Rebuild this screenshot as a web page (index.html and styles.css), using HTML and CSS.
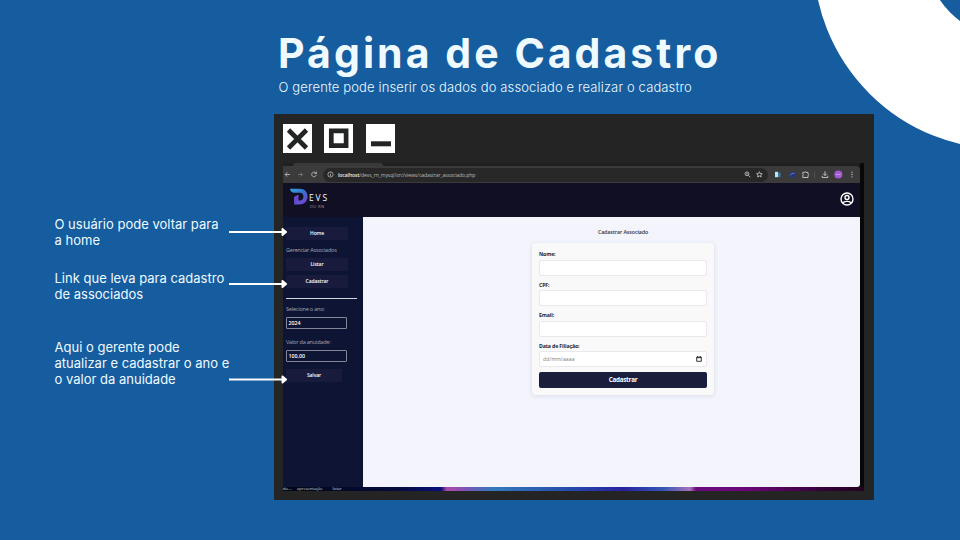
FILE: index.html
```html
<!DOCTYPE html>
<html lang="pt-BR">
<head>
<meta charset="utf-8">
<title>Página de Cadastro</title>
<link rel="stylesheet" href="styles.css">
</head>
<body>
<main class="slide">
  <svg class="ring" width="150" height="155" viewBox="810 0 150 155"><circle cx="1004" cy="-41.3" r="133.3" fill="none" stroke="#fff" stroke-width="114.4"/></svg>
  <header class="heading">
    <h1>Página de Cadastro</h1>
    <p>O gerente pode inserir os dados do associado e realizar o cadastro</p>
  </header>
  <div class="content">
    <aside class="notes">
      <p class="n1"><span>O usuário pode voltar para</span><br><span>a home</span></p>
      <p class="n2"><span>Link que leva para cadastro</span><br><span>de associados</span></p>
      <p class="n3"><span>Aqui o gerente pode</span><br><span>atualizar e cadastrar o ano e</span><br><span>o valor da anuidade</span></p>
    </aside>
    <section class="window">
      <div class="controls">
        <svg viewBox="0 0 29 29"><path d="M5.5 6 23.5 24M23.5 6 5.5 24" stroke="#232424" stroke-width="4.6"/></svg>
        <svg viewBox="0 0 29 29"><path d="M7.3 6.800h14.800v14.800H7.300z" fill="none" stroke="#232424" stroke-width="4.7"/></svg>
        <svg viewBox="0 0 29 29"><path d="M5 19.800h20" stroke="#232424" stroke-width="5"/></svg>
      </div>
      <div class="browser">
        <div class="tabs"><i></i></div>
        <div class="toolbar">
          <svg class="nav" width="40" height="17" viewBox="0 0 40 17" fill="none" stroke="#bbb" stroke-width=".9"><path d="M7 8.500H2.200M4.300 6.400 2.200 8.500l2.100 2.100"/><path stroke="#777" d="M15 8.500h4.600M17.600 6.500l2 2-2 2"/><path d="M33 7.200a2.300 2.300 0 1 0 .2 2M33.400 5.600v2h-2"/></svg>
          <div class="address">
            <svg width="7" height="7" viewBox="0 0 7 7" fill="none" stroke="#bbb" stroke-width=".8"><circle cx="3.5" cy="3.5" r="2.6"/><path d="M3.500 3v2.100M3.500 1.700v.6"/></svg>
            <span class="url"><b>localhost</b>/devs_rn_mysql/src/views/cadastrar_associado.php</span>
            <svg class="marks" width="24" height="11" viewBox="0 0 24 11" fill="none" stroke="#ccc" stroke-width=".8"><circle cx="5" cy="4.8" r="1.9"/><path d="m6.400 6.300 2 2M4 4.800h2"/><path d="m17.400 2.700.8 1.800 2 .2-1.500 1.300.5 2-1.800-1-1.800 1 .5-2L14.600 4.700l2-.2z"/></svg>
          </div>
          <svg class="ext" width="90" height="17" viewBox="0 0 90 17" fill="none" stroke="#ccc" stroke-width=".9"><path fill="#b9e7f4" stroke="none" d="M7 5.800h3v5.400H7z"/><path fill="#3979a5" stroke="none" d="M10 6.500h2.500v4.700H10z"/><rect x="21" y="6" width="6.5" height="5.8" rx="2" fill="#2a3474" stroke="none"/><path stroke="#5688ed" d="M22 9.500q.5-2 4.500-2.500"/><path d="M34.800 6.400h1.700q.5-1.600 1.500 0H40v1.800q1.500.7 0 1.500v1.800h-5.200v-1.800q1.400-.8 0-1.600z"/><path stroke="#555" d="M46.500 6v6"/><path d="M57 5.200v4.300M55.200 7.700 57 9.500l1.800-1.800M54.200 9.700v1.800h5.600V9.700"/><circle cx="70.300" cy="8.500" r="4" fill="#a358d4" stroke="none"/><path stroke="#caa1df" d="M68 8.500h4.600"/><g fill="#ccc" stroke="none"><circle cx="84" cy="6.200" r=".65"/><circle cx="84" cy="8.500" r=".65"/><circle cx="84" cy="10.800" r=".65"/></g></svg>
        </div>
        <div class="appbar">
          <div class="logo">
            <svg width="19" height="18" viewBox="0 0 19 18"><defs><linearGradient id="d" x1="0" y1="0" x2=".8" y2="1"><stop stop-color="#35a6dd"/><stop offset=".48" stop-color="#3574cf"/><stop offset="1" stop-color="#7440cf"/></linearGradient></defs><path d="M0 .7h9.500c5.200 0 8 3.100 8 7.700 0 4.900-3.200 8-8 8H4.300V9l4-2.200v5.700h1.500c2.300 0 3.600-1.500 3.600-4 0-2.400-1.300-3.800-3.600-3.800H4.200C2 4.700.4 3.300 0 .7z" fill="url(#d)"/><path d="m4.300 16.400 4-3.900V6.800l-4 2.200z" fill="#783fd3"/></svg>
            <div class="brand"><strong>EVS</strong><small>DU RN</small></div>
          </div>
          <svg class="user" width="14" height="14" viewBox="0 0 14 14" fill="none" stroke="#fff" stroke-width="1.4"><circle cx="7" cy="7" r="6"/><circle cx="7" cy="5.5" r="2"/><path d="M3 11.200c1-2.500 7-2.500 8 0"/></svg>
        </div>
        <div class="app">
          <nav class="side">
            <a class="btn home">Home</a>
            <p class="group">Gerenciar Associados</p>
            <a class="btn">Listar</a>
            <a class="btn reg">Cadastrar</a>
            <hr>
            <label>Selecione o ano:</label>
            <div class="field">2024</div>
            <label class="fee">Valor da anuidade:</label>
            <div class="field">100,00</div>
            <a class="btn save">Salvar</a>
          </nav>
          <div class="page">
            <h2>Cadastrar Associado</h2>
            <form class="card">
              <label>Nome:</label><div class="input"></div>
              <label>CPF:</label><div class="input"></div>
              <label>Email:</label><div class="input"></div>
              <label>Data de Filiação:</label>
              <div class="input date"><span>dd/mm/aaaa</span><svg width="6" height="6" viewBox="0 0 6 6"><path d="M.7 1.200h4.600v4.100H.7zM1.600 0v1M4.400 0v1M.7 1.700h4.600" fill="none" stroke="#222" stroke-width=".9"/></svg></div>
              <div class="submit">Cadastrar</div>
            </form>
          </div>
        </div>
        <div class="desktop"><span>da-...</span><span>apresentação</span><span>listar</span></div>
      </div>
    </section>
  </div>
  <svg class="arrows" width="59" height="160" viewBox="0 0 59 160"><g stroke="#fff" stroke-width="2" fill="#fff" stroke-linejoin="round"><path d="M0 5h54M53.500 2v6L57 5z"/><path d="M0 57h54M53.500 54v6l3.500-3z"/><path d="M0 152.500h54M53.500 149.500v6l3.500-3z"/></g></svg>
</main>
</body>
</html>
```
FILE: styles.css
```css
* { box-sizing: border-box; }
body { margin: 0; }
h1, h2, p { margin: 0; font-weight: 400; }
.slide { position: relative; width: 960px; height: 540px; overflow: hidden; background: #155d9f; color: #effaff; font-family: Inter, sans-serif; }
.ring { position: absolute; right: 0; top: 0; }
.arrows { position: absolute; left: 229px; top: 227px; }
.heading { height: 114px; padding: 28px 0 0 278.500px; white-space: nowrap; }
h1 { font-size: 41px; line-height: 50px; font-weight: 650; letter-spacing: 3.050px; margin-left: -.5px; }
.heading p { font-size: 13px; line-height: 19px; font-weight: 350; letter-spacing: .13px; }
.content { display: grid; grid-template-columns: 274px 599.500px; height: 386px; }
.notes { padding: 101.500px 0 0 54.500px; font-size: 13px; line-height: 16px; font-weight: 350; letter-spacing: .01px; white-space: nowrap; }
.n2 { margin-top: 22px; }
.n3 { margin-top: 37px; }
.window { height: 386px; padding: 10px 0 0 9px; background: #242424; }
.controls { display: flex; gap: 12.300px; height: 39px; }
.controls svg { width: 29px; height: 29px; background: #fff; }
.browser { width: 581px; height: 328px; padding-right: 4px; background: #08070a; font-family: "Open Sans", sans-serif; }
.tabs { height: 3px; background: #1f2020; padding-left: 10px; }
.tabs i { display: block; width: 90px; height: 3px; background: #393939; border-radius: 3px 3px 0 0; }
.toolbar { display: flex; align-items: center; height: 17px; background: #3b3b3b; border-radius: 0 3px 0 0; }
.address { display: flex; align-items: center; width: 445px; height: 14px; border-radius: 7px; background: #282828; padding-left: 4px; color: #bdbdbd; }
.url { margin-left: 4px; font-size: 5px; line-height: 8px; letter-spacing: -.06px; white-space: nowrap; }
.url b { color: #eee; font-weight: 600; }
.marks { margin-left: auto; margin-right: 2px; }
.nav, .ext { flex: none; }
.appbar { display: flex; justify-content: space-between; align-items: flex-start; height: 34px; padding: 5px 6px 0 7px; background: #110f23; }
.logo { display: flex; }
.brand { display: flex; flex-direction: column; width: 24px; padding: 4px 0 0; }
.brand strong { font: 400 8.500px/11px "Open Sans", sans-serif; letter-spacing: 1.900px; }
.brand small { font-size: 4.200px; line-height: 6px; margin-top: 1px; padding-left: 1px; letter-spacing: .3px; color: #9796a4; }
.user { margin-top: 4px; }
.app { display: grid; grid-template-columns: 80px 497px; height: 270px; }
.side { background: #0e1433; padding: 10px 6px 0 3px; font-size: 5px; color: #a7a8b6; }
.btn { display: block; width: 62px; height: 13px; line-height: 13px; text-align: center; background: #191b3c; color: #fff; font-size: 5px; font-weight: 600; letter-spacing: -.1px; }
.group { height: 18px; padding-top: 6px; font-size: 5.500px; line-height: 9px; letter-spacing: -.22px; white-space: nowrap; }
.reg { margin-top: 4px; }
.side hr { width: 71px; height: 1px; margin: 10px 0 7px; border: 0; background: #d3d5df; }
.side label { display: block; height: 11px; line-height: 7px; font-size: 5.500px; letter-spacing: -.2px; white-space: nowrap; }
.field { width: 61px; height: 12px; border: 1px solid #858799; border-radius: 1px; padding-left: 1.500px; line-height: 10px; color: #fff; font-size: 5.300px; font-weight: 600; }
.side .fee { margin-top: 10px; }
.save { width: 56px; margin-top: 7px; }
.page { background: #f3f4fc; padding: 11px 0 0 169px; border-radius: 0 0 3px 0; }
.page h2 { width: 182px; height: 15px; line-height: 9px; text-align: center; font-size: 5.300px; font-weight: 600; letter-spacing: -.1px; color: #333540; }
.card { display: block; width: 182px; height: 151.500px; padding: 7px 7px 0; border-radius: 4px; background: #f9f9fa; box-shadow: 0 1px 4px #d8dae5; color: #1b1e34; }
.card label { display: block; height: 9.500px; font-size: 5.200px; line-height: 8px; font-weight: 700; letter-spacing: -.13px; }
.input { height: 16px; margin-bottom: 5px; border: 1px solid #e9e9ed; border-radius: 2px; background: #fff; }
.date { display: flex; align-items: center; justify-content: space-between; padding: 0 4px 0 3px; font-size: 5px; color: #777; letter-spacing: .15px; }
.submit { height: 16px; border-radius: 2px; background: #191e3d; color: #fff; text-align: center; font-size: 6.300px; line-height: 16px; font-weight: 700; letter-spacing: -.25px; }
.desktop { display: flex; height: 4px; margin-right: -4px; gap: 5px; color: #ddd; font-size: 4px; line-height: 4px; white-space: nowrap; background: linear-gradient(90deg, #020714 0, #040b3c 115px, #071079 158px, #ae4aa5 164px, #8452b6 180px, #3479bb 210px, #2850ac 280px, #27229e 340px, #3556b5 380px, #a873ba 407px, #690d7c 413px, #6d0779 460px, #350139 540px, #20011d 581px); }
.desktop span:last-child { margin-left: 5px; }
```
